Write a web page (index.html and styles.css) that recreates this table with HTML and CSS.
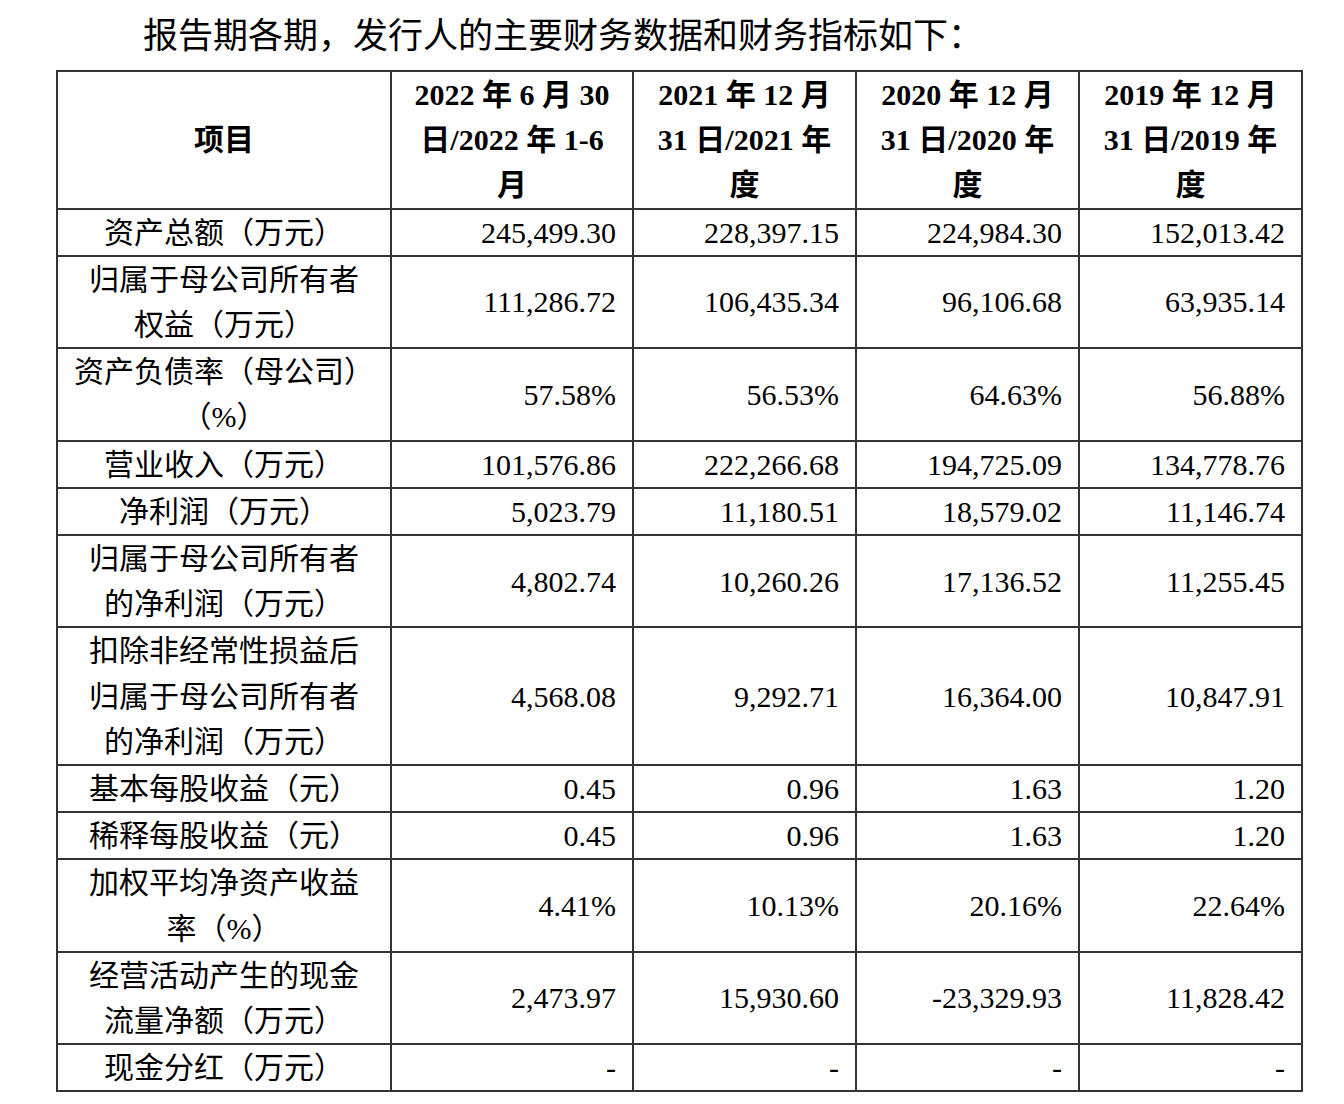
FILE: index.html
```html
<!DOCTYPE html>
<html lang="zh-CN">
<head>
<meta charset="utf-8">
<title>主要财务数据和财务指标</title>
<link rel="stylesheet" href="styles.css">
</head>
<body>
<p class="intro">报告期各期，发行人的主要财务数据和财务指标如下：</p>
<table class="fin">
  <colgroup>
    <col class="c-label">
    <col class="c-first">
    <col class="c-year">
    <col class="c-year">
    <col class="c-year">
  </colgroup>
  <thead>
    <tr>
      <th>项目</th>
      <th>2022 年 6 月 30<br>日/2022 年 1-6<br>月</th>
      <th>2021 年 12 月<br>31 日/2021 年<br>度</th>
      <th>2020 年 12 月<br>31 日/2020 年<br>度</th>
      <th>2019 年 12 月<br>31 日/2019 年<br>度</th>
    </tr>
  </thead>
  <tbody>
    <tr><td class="lbl">资产总额（万元）</td><td>245,499.30</td><td>228,397.15</td><td>224,984.30</td><td>152,013.42</td></tr>
    <tr><td class="lbl">归属于母公司所有者<br>权益（万元）</td><td>111,286.72</td><td>106,435.34</td><td>96,106.68</td><td>63,935.14</td></tr>
    <tr><td class="lbl">资产负债率（母公司）<br>（%）</td><td>57.58%</td><td>56.53%</td><td>64.63%</td><td>56.88%</td></tr>
    <tr><td class="lbl">营业收入（万元）</td><td>101,576.86</td><td>222,266.68</td><td>194,725.09</td><td>134,778.76</td></tr>
    <tr><td class="lbl">净利润（万元）</td><td>5,023.79</td><td>11,180.51</td><td>18,579.02</td><td>11,146.74</td></tr>
    <tr><td class="lbl">归属于母公司所有者<br>的净利润（万元）</td><td>4,802.74</td><td>10,260.26</td><td>17,136.52</td><td>11,255.45</td></tr>
    <tr><td class="lbl">扣除非经常性损益后<br>归属于母公司所有者<br>的净利润（万元）</td><td>4,568.08</td><td>9,292.71</td><td>16,364.00</td><td>10,847.91</td></tr>
    <tr><td class="lbl">基本每股收益（元）</td><td>0.45</td><td>0.96</td><td>1.63</td><td>1.20</td></tr>
    <tr><td class="lbl">稀释每股收益（元）</td><td>0.45</td><td>0.96</td><td>1.63</td><td>1.20</td></tr>
    <tr><td class="lbl">加权平均净资产收益<br>率（%）</td><td>4.41%</td><td>10.13%</td><td>20.16%</td><td>22.64%</td></tr>
    <tr><td class="lbl">经营活动产生的现金<br>流量净额（万元）</td><td>2,473.97</td><td>15,930.60</td><td>-23,329.93</td><td>11,828.42</td></tr>
    <tr><td class="lbl">现金分红（万元）</td><td>-</td><td>-</td><td>-</td><td>-</td></tr>
  </tbody>
</table>
</body>
</html>
```

FILE: styles.css
```css
html, body {
  margin: 0;
  padding: 0;
  background: #ffffff;
}

body {
  font-family: "Liberation Serif", "Noto Sans CJK SC", serif;
  color: #000000;
}

.intro {
  margin: 14px 0 10px 143px;
  font-size: 35px;
  line-height: 46px;
  white-space: nowrap;
}

.fin {
  margin-left: 56px;
  width: 1245px;
  table-layout: fixed;
  border-collapse: collapse;
  font-size: 30px;
  line-height: 45.2px;
}

.c-label { width: 334px; }
.c-first { width: 242px; }
.c-year { width: 223px; }

.fin th,
.fin td {
  border: 2px solid #333333;
  padding: 0;
  vertical-align: middle;
  white-space: nowrap;
}

.fin th {
  font-weight: bold;
  text-align: center;
}

.fin td {
  text-align: right;
  padding-right: 16px;
}

.fin td.lbl {
  text-align: center;
  padding: 0;
}
```
